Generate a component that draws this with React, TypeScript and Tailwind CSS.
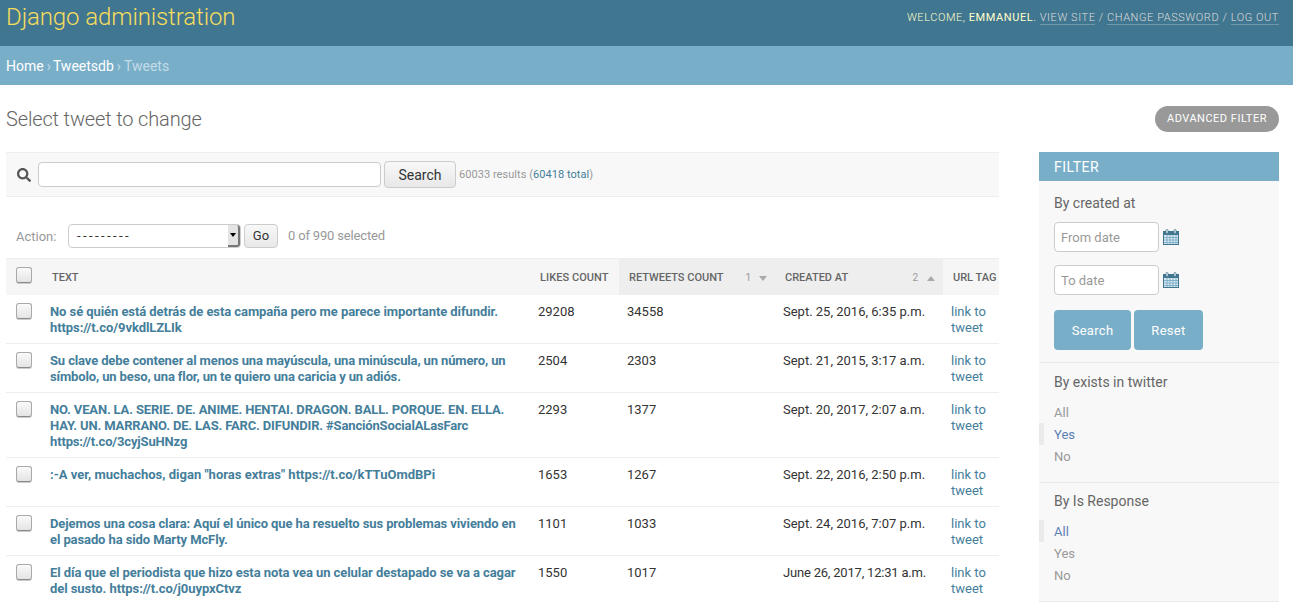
import { FaSearch } from "react-icons/fa";

const rows = [
  {
    text: ["No sé quién está detrás de esta campaña pero me parece importante difundir.", "https://t.co/9vkdlLZLIk"],
    track: "tracking-[-0.07px]",
    likes: "29208",
    retweets: "34558",
    created: "Sept. 25, 2016, 6:35 p.m.",
    dateTrack: "",
  },
  {
    text: ["Su clave debe contener al menos una mayúscula, una minúscula, un número, un", "símbolo, un beso, una flor, un te quiero una caricia y un adiós."],
    track: "tracking-[-0.13px]",
    likes: "2504",
    retweets: "2303",
    created: "Sept. 21, 2015, 3:17 a.m.",
    dateTrack: "",
  },
  {
    text: ["NO. VEAN. LA. SERIE. DE. ANIME. HENTAI. DRAGON. BALL. PORQUE. EN. ELLA.", "HAY. UN. MARRANO. DE. LAS. FARC. DIFUNDIR. #SanciónSocialALasFarc", "https://t.co/3cyjSuHNzg"],
    track: "tracking-[-0.15px]",
    likes: "2293",
    retweets: "1377",
    created: "Sept. 20, 2017, 2:07 a.m.",
    dateTrack: "",
  },
  {
    text: [':-A ver, muchachos, digan "horas extras" https://t.co/kTTuOmdBPi'],
    track: "tracking-[0.01px]",
    likes: "1653",
    retweets: "1267",
    created: "Sept. 22, 2016, 2:50 p.m.",
    dateTrack: "",
  },
  {
    text: ["Dejemos una cosa clara: Aquí el único que ha resuelto sus problemas viviendo en", "el pasado ha sido Marty McFly."],
    track: "tracking-[-0.1px]",
    likes: "1101",
    retweets: "1033",
    created: "Sept. 24, 2016, 7:07 p.m.",
    dateTrack: "",
  },
  {
    text: ["El día que el periodista que hizo esta nota vea un celular destapado se va a cagar", "del susto. https://t.co/j0uypxCtvz"],
    track: "tracking-[-0.07px]",
    likes: "1550",
    retweets: "1017",
    created: "June 26, 2017, 12:31 a.m.",
    dateTrack: "tracking-[-0.2px]",
  },
];

function Checkbox() {
  return <div className="h-4 w-4 rounded-[3px] border border-[#a9a9a9] border-b-[#8a8a8a] bg-gradient-to-b from-[#fafafa] to-[#e4e4e4] shadow-[0_1px_0_#ccc]" />;
}

function CalendarIcon() {
  return (
    <svg width="16" height="16" viewBox="0 0 16 16" className="shrink-0">
      <rect x="0.5" y="2.5" width="15" height="13" fill="#dce8ef" stroke="#417690" />
      <rect x="1" y="3" width="14" height="3" fill="#417690" />
      <rect x="3" y="0.5" width="2" height="4" rx="1" fill="#f8f8f8" stroke="#417690" strokeWidth="0.8" />
      <rect x="11" y="0.5" width="2" height="4" rx="1" fill="#f8f8f8" stroke="#417690" strokeWidth="0.8" />
      <path d="M4 6v9M7 6v9M10 6v9M13 6v9M1 8.5h14M1 11h14M1 13.5h14" stroke="#79aec8" strokeWidth="0.9" />
    </svg>
  );
}

function FilterList({ title, selected, top }: { title: string; selected: string; top: string }) {
  return (
    <div className={top}>
      <h3 className="pl-[15px] text-sm leading-[18px] text-[#666]">{title}</h3>
      <ul className="mt-[10px] text-[13px] leading-[21px]">
        {["All", "Yes", "No"].map((o) => (
          <li
            key={o}
            className={
              o === selected
                ? "border-l-[5px] border-[#eaeaea] pt-[1px] pl-[10px] text-[#5b80b2]"
                : "pt-[1px] pl-[15px] text-[#999]"
            }
          >
            {o}
          </li>
        ))}
      </ul>
    </div>
  );
}

export default function App() {
  return (
    <div className="h-[603px] overflow-hidden bg-white font-['Roboto',sans-serif] text-[#333]">
      {/* header */}
      <header className="flex h-[46px] items-start justify-between bg-[#417690] pl-[6px] pr-[14px]">
        <div className="pt-[2px] text-2xl leading-[30px] font-light tracking-[-0.1px] text-[#f5dd5d]">Django administration</div>
        <div className="pt-[11px] text-[11px] leading-[14px] font-light tracking-[0.57px] text-[#ffc] uppercase">
          Welcome, <strong className="font-normal">Emmanuel</strong>.{" "}
          <span className="border-b border-white/25 text-[#ddd]">View site</span> <span className="text-[#ddd]">/</span>{" "}
          <span className="border-b border-white/25 text-[#ddd]">Change password</span> <span className="text-[#ddd]">/</span>{" "}
          <span className="border-b border-white/25 text-[#ddd]">Log out</span>
        </div>
      </header>

      {/* breadcrumbs */}
      <div className="flex h-[39px] items-center bg-[#79aec8] pl-[6px] text-sm text-[#c4dce8]">
        <span className="text-white">Home</span>
        <span className="pr-[2px] pl-[3px]">›</span>
        <span className="text-white">Tweetsdb</span>
        <span className="px-[3px]">›</span>
        <span>Tweets</span>
      </div>

      <div className="pr-[14px] pl-[6px]">
        <div className="flex h-[67px] items-center justify-between">
          <h1 className="text-xl leading-[24px] font-light tracking-[-0.15px] text-[#666]">Select tweet to change</h1>
          <div className="flex h-[26px] w-[124px] items-center justify-center rounded-[15px] bg-[#999] pt-[1px] text-[11px] tracking-[0.5px] text-white uppercase">
            Advanced filter
          </div>
        </div>

        <div className="flex items-start justify-between">
          {/* changelist */}
          <div className="w-[993px]">
            <div className="flex h-[45px] items-center border-y border-[#eee] bg-[#f8f8f8] pl-[11px]">
              <FaSearch className="text-sm text-[#555]" />
              <div className="ml-[7px] h-[25px] w-[343px] rounded-[4px] border border-[#ccc] bg-white" />
              <div className="ml-[3px] flex h-[27px] w-[72px] items-center justify-center rounded-[4px] border border-[#ccc] bg-gradient-to-b from-[#f8f8f8] to-[#e8e8e8] text-sm text-[#333]">
                Search
              </div>
              <div className="mt-[2px] ml-[3px] text-[11px] tracking-[0.05px] text-[#999]">
                60033 results (<span className="text-[#447e9b]">60418 total</span>)
              </div>
            </div>

            <div className="flex h-[61px] items-center pt-[17px] pl-[10px] text-[13px]">
              <span className="w-[52px] pt-[1px] text-[#999]">Action:</span>
              <div className="flex h-[24px] w-[173px] items-stretch rounded-[4px] border border-[#ccc] bg-white pl-[8px]">
                <span className="flex-1 text-[13px] leading-[22px] tracking-[2.4px] text-[#333]">---------</span>
                <span className="flex w-[12px] items-center justify-center rounded-r-[3px] border-r-2 border-b-2 border-[#777] bg-[#e4e4e4]">
                  <span className="h-0 w-0 border-x-[3px] border-t-[4px] border-x-transparent border-t-black" />
                </span>
              </div>
              <div className="ml-[3px] flex h-[24px] w-[34px] items-center justify-center rounded-[4px] border border-[#ccc] bg-gradient-to-b from-[#f8f8f8] to-[#e8e8e8] text-[13px] text-[#333]">
                Go
              </div>
              <span className="ml-[10px] tracking-[-0.17px] text-[#999]">0 of 990 selected</span>
            </div>

            <table className="w-[993px] table-fixed border-collapse text-[13px] leading-[16px]">
              <colgroup>
                <col className="w-[36px]" />
                <col className="w-[488px]" />
                <col className="w-[89px]" />
                <col className="w-[156px]" />
                <col className="w-[168px]" />
                <col className="w-[56px]" />
              </colgroup>
              <thead>
                <tr className="h-[36px] border-t border-[#eee] bg-[#f6f6f6] text-left text-[11px] font-medium text-[#666] uppercase">
                  <th className="pt-[8px] pl-[10px] align-top">
                    <Checkbox />
                  </th>
                  <th className="pt-[3px] pl-[10px] font-medium">Text</th>
                  <th className="pt-[3px] pl-[10px] font-medium tracking-[0.05px]">Likes count</th>
                  <th className="bg-[#eee] pt-[3px] pl-[10px] font-medium">
                    <div className="flex items-center justify-between pr-[8px]">
                      <span>Retweets count</span>
                      <span className="flex items-center gap-[8px] text-[10px] font-normal text-[#999]">
                        1<span className="h-0 w-0 border-x-[4px] border-t-[5px] border-x-transparent border-t-[#aaa]" />
                      </span>
                    </div>
                  </th>
                  <th className="bg-[#eee] pt-[3px] pl-[10px] font-medium">
                    <div className="flex items-center justify-between pr-[8px]">
                      <span>Created at</span>
                      <span className="flex items-center gap-[9px] text-[10px] font-normal text-[#999]">
                        2<span className="h-0 w-0 border-x-[4px] border-b-[5px] border-x-transparent border-b-[#aaa]" />
                      </span>
                    </div>
                  </th>
                  <th className="overflow-hidden pt-[3px] pl-[10px] font-medium whitespace-nowrap">Url tag</th>
                </tr>
              </thead>
              <tbody>
                {rows.map((r) => (
                  <tr key={r.likes} className="border-b border-[#eee] align-top">
                    <td className="pt-[8px] pl-[10px]">
                      <Checkbox />
                    </td>
                    <td className={"pt-[9px] pb-[7px] pl-[8px] font-bold text-[#447e9b] " + r.track}>
                      {r.text.map((l) => (
                        <div key={l} className="whitespace-nowrap">
                          {l}
                        </div>
                      ))}
                    </td>
                    <td className="pt-[9px] pb-[7px] pl-[8px]">{r.likes}</td>
                    <td className="pt-[9px] pb-[7px] pl-[8px]">{r.retweets}</td>
                    <td className={"pt-[9px] pb-[7px] pl-[8px] whitespace-nowrap " + r.dateTrack}>{r.created}</td>
                    <td className="pt-[9px] pb-[7px] pl-[8px] text-[#447e9b]">
                      link to
                      <br />
                      tweet
                    </td>
                  </tr>
                ))}
              </tbody>
            </table>
          </div>

          {/* filter sidebar */}
          <aside className="w-[240px] bg-[#f8f8f8]">
            <h2 className="flex h-[29px] items-center bg-[#79aec8] pl-[15px] text-sm tracking-[0.5px] text-white uppercase">Filter</h2>
            <div className="h-[182px] border-b border-[#eaeaea] px-[15px] pt-[13px]">
              <h3 className="text-sm leading-[18px] text-[#666]">By created at</h3>
              <div className="mt-[10px] flex items-center gap-[4px]">
                <div className="flex h-[30px] w-[105px] items-center rounded-[4px] border border-[#ccc] bg-white pt-[1px] pl-[6px] text-[13px] text-[#999]">From date</div>
                <CalendarIcon />
              </div>
              <div className="mt-[13px] flex items-center gap-[4px]">
                <div className="flex h-[30px] w-[105px] items-center rounded-[4px] border border-[#ccc] bg-white pt-[1px] pl-[6px] text-[13px] text-[#999]">To date</div>
                <CalendarIcon />
              </div>
              <div className="mt-[15px] flex gap-[3px] text-[13px] tracking-[0.3px] text-white">
                <div className="flex h-[40px] w-[77px] items-center justify-center rounded-[4px] bg-[#79aec8] pt-[1px]">Search</div>
                <div className="flex h-[40px] w-[69px] items-center justify-center rounded-[4px] bg-[#79aec8] pt-[1px]">Reset</div>
              </div>
            </div>
            <FilterList title="By exists in twitter" selected="Yes" top="h-[120px] border-b border-[#eaeaea] pt-[10px]" />
            <FilterList title="By Is Response" selected="All" top="h-[119px] border-b border-[#eaeaea] pt-[9px]" />
          </aside>
        </div>
      </div>
    </div>
  );
}
